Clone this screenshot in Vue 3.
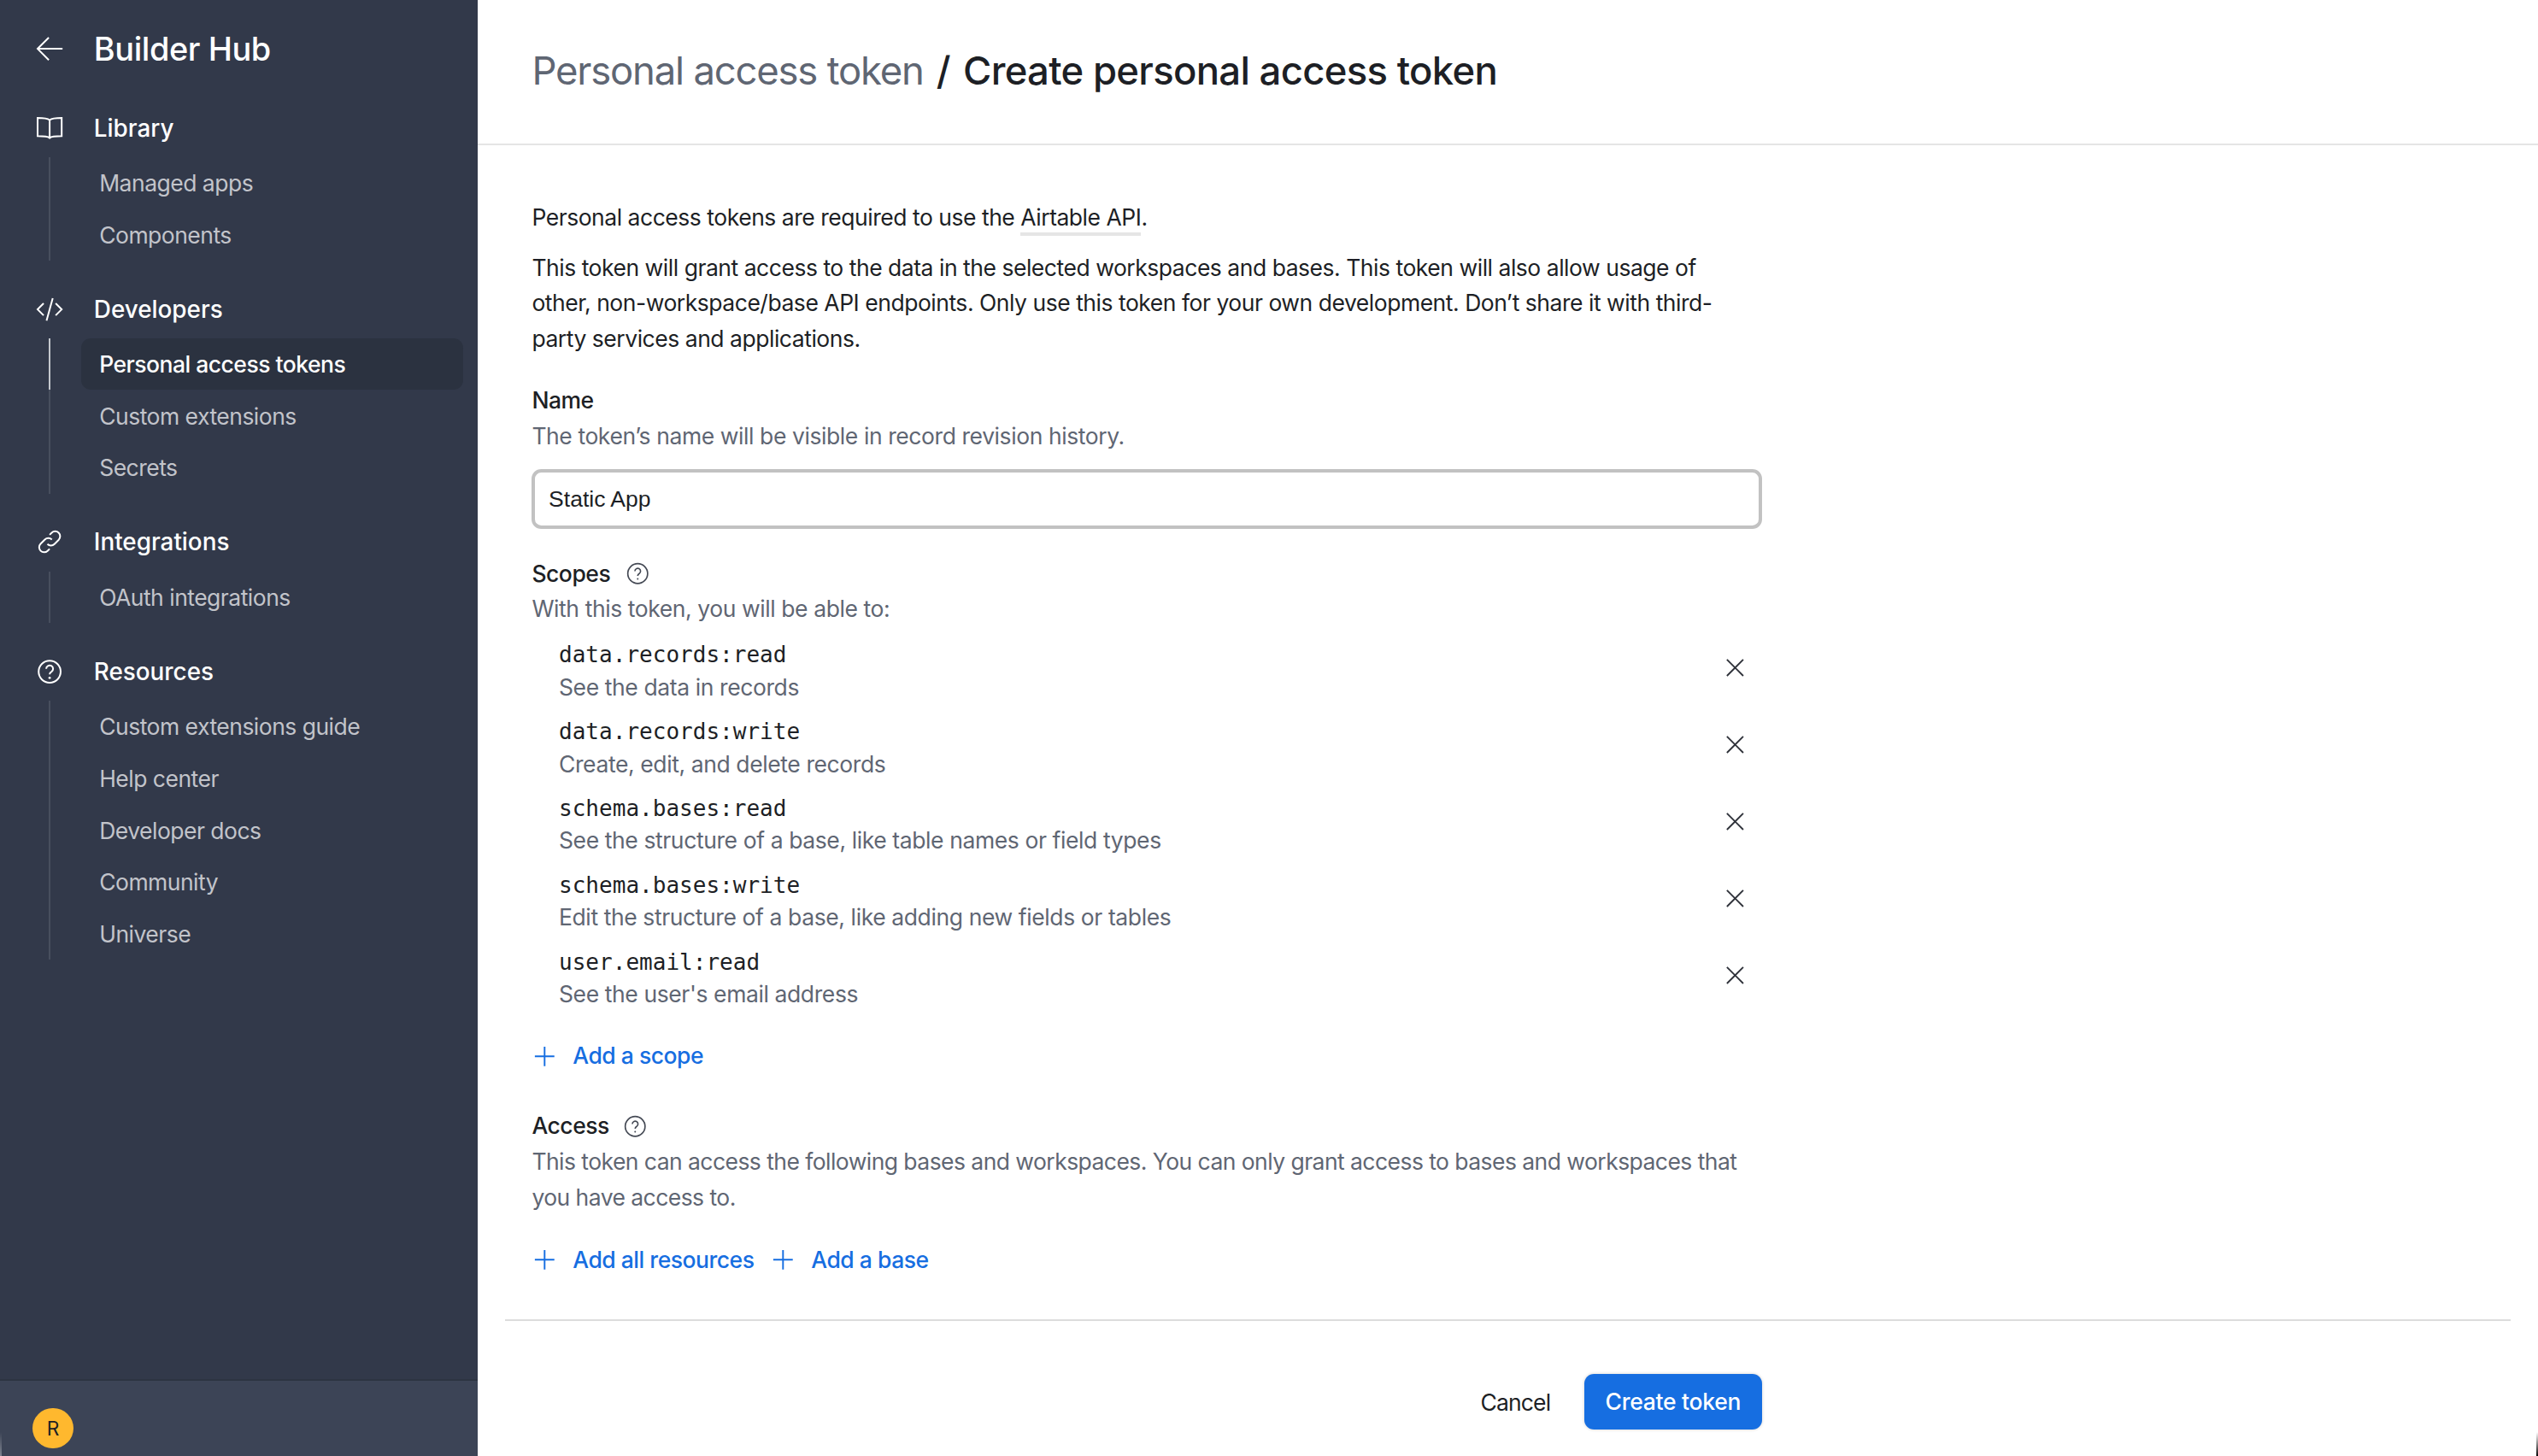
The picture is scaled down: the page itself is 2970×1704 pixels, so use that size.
<script setup>
const sections = [
  { title: 'Library', icon: 'book', items: ['Managed apps', 'Components'] },
  { title: 'Developers', icon: 'code', items: ['Personal access tokens', 'Custom extensions', 'Secrets'] },
  { title: 'Integrations', icon: 'link', items: ['OAuth integrations'] },
  { title: 'Resources', icon: 'help', items: ['Custom extensions guide', 'Help center', 'Developer docs', 'Community', 'Universe'] },
]
const scopes = [
  { name: 'data.records:read', desc: 'See the data in records' },
  { name: 'data.records:write', desc: 'Create, edit, and delete records' },
  { name: 'schema.bases:read', desc: 'See the structure of a base, like table names or field types' },
  { name: 'schema.bases:write', desc: 'Edit the structure of a base, like adding new fields or tables' },
  { name: 'user.email:read', desc: "See the user's email address" },
]
</script>

<template>
  <div class="app">
    <aside class="sidebar">
      <div class="side-scroll">
        <div class="brand">
          <svg class="icon" viewBox="0 0 16 16"><path d="M15.5 8H1M7.5 1.5 1 8l6.5 6.5" /></svg>
          <span class="brand-name">Builder Hub</span>
        </div>
        <section v-for="s in sections" :key="s.title" class="section">
          <div class="section-head">
            <svg class="icon" viewBox="0 0 16 16">
              <template v-if="s.icon === 'book'">
                <path d="M8 3.2C7 2.4 5.5 2 1 2v10.6c4.5 0 6 .2 7 1 1-.8 2.500-1 7-1V2c-4.500 0-6 .4-7 1.200ZM8 3.200v11" />
              </template>
              <template v-else-if="s.icon === 'code'">
                <path d="M4.500 4.500 1 8l3.500 3.500M11.500 4.500 15 8l-3.500 3.500M9.800 1.500 6.200 14.500" />
              </template>
              <template v-else-if="s.icon === 'link'">
                <path d="M6.700 9.300a2.900 2.900 0 0 0 4.100 0l2.500-2.500a2.900 2.900 0 0 0-4.100-4.100L8 3.900M9.300 6.700a2.900 2.900 0 0 0-4.100 0l-2.500 2.500a2.900 2.900 0 0 0 4.100 4.100L8 12.100" />
              </template>
              <template v-else>
                <circle cx="8" cy="8" r="6.400" />
                <path d="M6 6.300a2 2 0 1 1 3.100 1.700c-.7.4-1.100.8-1.100 1.600" />
                <circle class="dot" cx="8" cy="11.600" r=".7" />
              </template>
            </svg>
            <span class="section-title">{{ s.title }}</span>
          </div>
          <ul class="list">
            <li v-for="it in s.items" :key="it" class="item" :class="{ active: it === 'Personal access tokens' }">
              <span class="item-label">{{ it }}</span>
            </li>
          </ul>
        </section>
      </div>
      <div class="side-foot"><span class="avatar">R</span></div>
    </aside>

    <main class="main">
      <header class="top">
        <h1 class="crumbs">
          <span class="crumb-muted">Personal access token</span>
          <span class="crumb-sep">/</span>
          <span>Create personal access token</span>
        </h1>
      </header>

      <div class="content">
        <div class="form">
          <p class="lead">Personal access tokens are required to use the <a class="ext">Airtable API</a>.</p>
          <p class="para">This token will grant access to the data in the selected workspaces and bases. This token will also allow usage of other, non-workspace/base API endpoints. Only use this token for your own development. Don’t share it with third-party services and applications.</p>

          <div class="label name-label">Name</div>
          <div class="hint">The token’s name will be visible in record revision history.</div>
          <input class="input" value="Static App" />

          <div class="label scopes-label">
            Scopes
            <svg class="help" viewBox="0 0 16 16"><circle cx="8" cy="8" r="7" /><path d="M6 6.300a2 2 0 1 1 3.100 1.700c-.7.4-1.100.8-1.100 1.600" /><circle class="dot" cx="8" cy="11.800" r=".6" /></svg>
          </div>
          <div class="hint">With this token, you will be able to:</div>
          <div class="scopes">
            <div v-for="s in scopes" :key="s.name" class="scope">
              <div>
                <div class="scope-name">{{ s.name }}</div>
                <div class="scope-desc">{{ s.desc }}</div>
              </div>
              <svg class="x" viewBox="0 0 12 12"><path d="M.5.500l11 11M11.500.500l-11 11" /></svg>
            </div>
          </div>
          <div class="add-row scope-add">
            <span class="add"><svg class="plus" viewBox="0 0 14 14"><path d="M7 .5v13M.5 7h13" /></svg>Add a scope</span>
          </div>

          <div class="label access-label">
            Access
            <svg class="help" viewBox="0 0 16 16"><circle cx="8" cy="8" r="7" /><path d="M6 6.300a2 2 0 1 1 3.100 1.700c-.7.4-1.100.8-1.100 1.600" /><circle class="dot" cx="8" cy="11.800" r=".6" /></svg>
          </div>
          <div class="hint hint-long">This token can access the following bases and workspaces. You can only grant access to bases and workspaces that you have access to.</div>
          <div class="add-row access-add">
            <span class="add"><svg class="plus" viewBox="0 0 14 14"><path d="M7 .5v13M.5 7h13" /></svg>Add all resources</span>
            <span class="add"><svg class="plus" viewBox="0 0 14 14"><path d="M7 .5v13M.5 7h13" /></svg>Add a base</span>
          </div>
        </div>
      </div>

      <footer class="foot">
        <div class="foot-inner">
          <span class="cancel">Cancel</span>
          <button class="primary">Create token</button>
        </div>
      </footer>
    </main>
    <i class="corner corner-left"></i>
    <i class="corner corner-right"></i>
  </div>
</template>

<style>
html, body { margin: 0; background: #fff; overflow: hidden; }
</style>

<style scoped>
.app {
  zoom: 1.8941;
  position: relative;
  display: flex;
  width: 1568px;
  height: 900px;
  overflow: hidden;
  font-family: Inter, "Liberation Sans", sans-serif;
  font-size: 14px;
  letter-spacing: -.25px;
  color: #1d1f25;
}
.corner { position: absolute; bottom: 0; width: 1.100px; height: 15px; }
.corner-left { left: 0; background: linear-gradient(rgba(255,255,255,0), rgba(255,255,255,.35)); }
.corner-right { right: 0; background: linear-gradient(rgba(0,0,0,0), #000); }
.sidebar {
  width: 295px;
  flex: none;
  background: #32394a;
  display: flex;
  flex-direction: column;
}
.side-scroll { flex: 1; min-height: 0; }
.brand {
  height: 60px;
  margin-bottom: 3px;
  display: flex;
  align-items: center;
  padding-left: 22px;
  gap: 19px;
  color: #fff;
}
.brand-name { font-size: 20px; font-weight: 500; letter-spacing: -.22px; }
.icon {
  width: 17px;
  height: 17px;
  flex: none;
  fill: none;
  stroke: #fff;
  stroke-width: 1;
}
.dot { fill: currentColor; stroke: none; }
.section { margin-bottom: 14px; }
.section-head {
  height: 32px;
  margin-bottom: 2px;
  display: flex;
  align-items: center;
  padding-left: 22px;
  gap: 19px;
  color: #fff;
}
.section-title { font-size: 14.700px; font-weight: 500; letter-spacing: 0; }
.list {
  list-style: none;
  margin: 0 0 0 30px;
  padding: 0 9px 0 19px;
  border-left: 1.100px solid #474e5e;
}
.item {
  position: relative;
  height: 32px;
  display: flex;
  align-items: center;
  padding-left: 11.300px;
  border-radius: 6px;
  color: #c2c4ca;
  letter-spacing: -.27px;
}
.item.active { background: #2b3240; color: #fff; font-weight: 500; }
.item.active::before {
  content: '';
  position: absolute;
  left: -20.100px;
  top: 0;
  bottom: 0;
  width: 1.100px;
  background: #c4c7cd;
}
.side-foot {
  height: 48px;
  flex: none;
  background: #3c4456;
  border-top: 1.100px solid #2d3442;
  box-sizing: border-box;
  display: flex;
  align-items: center;
  padding-left: 20.300px;
}
.avatar {
  width: 25px;
  height: 25px;
  border-radius: 50%;
  background: #ffb82e;
  color: #1d1f25;
  font-size: 12px;
  letter-spacing: 0;
  display: flex;
  align-items: center;
  justify-content: center;
  margin-top: 12px;
}
.main {
  flex: 1;
  min-width: 0;
  display: flex;
  flex-direction: column;
  background: #fff;
}
.top {
  height: 90px;
  box-sizing: border-box;
  flex: none;
  border-bottom: 1.100px solid #e5e5e5;
  padding: 0 0 1.500px 33.600px;
  display: flex;
  align-items: center;
}
.crumbs {
  margin: 0;
  font-size: 24px;
  font-weight: 500;
  letter-spacing: -.37px;
  color: #1d1f25;
  display: flex;
  gap: 8px;
}
.crumb-muted { color: #5f6673; font-weight: 400; letter-spacing: -.63px; }
.content { flex: 1; min-height: 0; padding: 33.500px 0 0 33.600px; }
.form { width: 760px; line-height: 22px; }
.lead, .para { margin: 0; }
.lead { margin-bottom: 9px; }
.para { max-width: 735px; }
.ext { border-bottom: 2.200px solid #e5e5e5; padding-bottom: 1px; }
.label { font-weight: 500; display: flex; align-items: center; }
.name-label { margin-top: 16px; }
.hint { color: #5f6673; letter-spacing: -.22px; }
.hint-long { letter-spacing: -.29px; }
.input {
  display: block;
  width: 100%;
  height: 37px;
  box-sizing: border-box;
  margin-top: 9.500px;
  border: 2.200px solid #c2c2c2;
  border-radius: 6px;
  padding: 0 8.300px;
  font: 14px "Liberation Sans", sans-serif;
  color: #1d1f25;
  outline: none;
}
.scopes-label { margin-top: 16.500px; }
.help {
  width: 14px;
  height: 14px;
  margin-left: 10px;
  fill: none;
  stroke: #444954;
  stroke-width: 1;
  color: #444954;
}
.access-label .help { margin-left: 9px; }
.scopes { margin-top: 3.500px; padding-left: 16.700px; }
.scope {
  height: 47.500px;
  display: flex;
  align-items: center;
  justify-content: space-between;
  padding-right: 11px;
}
.scope-name {
  font-family: "DejaVu Sans Mono", monospace;
  font-size: 13.750px;
  line-height: 20px;
  letter-spacing: 0;
}
.scope-desc { color: #5f6673; line-height: 20px; letter-spacing: -.21px; }
.x { width: 11px; height: 11px; margin-bottom: 4px; fill: none; stroke: #2f323a; stroke-width: 1.100; }
.add-row { display: flex; gap: 10px; }
.scope-add { margin-top: 13px; }
.access-add { margin-top: 16.500px; }
.add {
  display: inline-flex;
  align-items: center;
  gap: 11px;
  padding-left: 1.300px;
  color: #166ee1;
  font-weight: 500;
}
.plus { width: 13px; height: 13px; fill: none; stroke: #166ee1; stroke-width: 1.100; }
.access-label { margin-top: 21.500px; }
.foot { flex: none; padding: 0 17px 0 17px; height: 85px; box-sizing: border-box; }
.foot-inner {
  border-top: 1.100px solid #dcdcdc;
  height: 100%;
  box-sizing: border-box;
  display: flex;
  justify-content: flex-end;
  align-items: flex-start;
  padding: 33px 462.500px 0 0;
  gap: 21px;
}
.cancel { line-height: 35px; letter-spacing: -.45px; }
.primary {
  height: 34px;
  padding: 0 13px;
  border: 0;
  border-radius: 6px;
  background: #166ee1;
  color: #fff;
  font: 500 14px Inter, sans-serif;
  letter-spacing: -.15px;
  box-shadow: 0 0 2px rgba(0,0,0,.2);
}
</style>
